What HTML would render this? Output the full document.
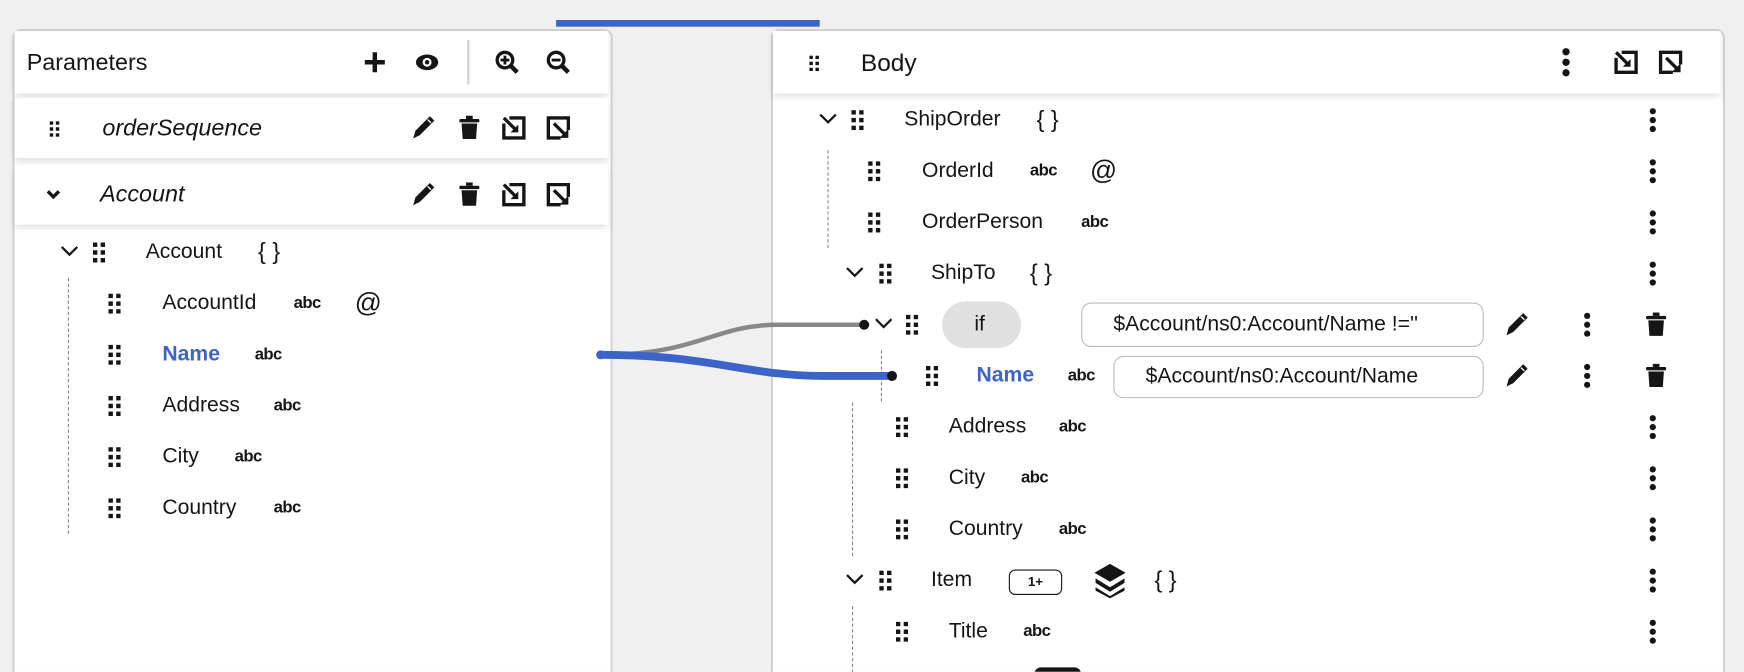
<!DOCTYPE html>
<html><head><meta charset="utf-8"><style>
html,body{margin:0;padding:0;width:1744px;height:672px;overflow:hidden;background:#f0f0f0;font-family:"Liberation Sans",sans-serif;color:#151515}
#w{position:absolute;left:0;top:0;width:1568px;height:604px;overflow:hidden;transform:scale(1.11224);transform-origin:0 0}
.a{position:absolute}
.t{position:absolute;transform:translateY(-50%);white-space:nowrap;font-size:19px;line-height:24px}
.abc{font-size:15px;font-weight:bold;letter-spacing:-0.5px}
.i{position:absolute;transform:translate(-50%,-50%)}
.panel{position:absolute;background:#fff;border:2px solid #d2d2d2;border-bottom:none;border-radius:8px 8px 0 0;overflow:hidden}
.card{position:absolute;background:#fff;box-shadow:0 3px 6px rgba(0,0,0,.13)}
.dl{position:absolute;border-left:1.5px dashed #888;width:0}
.box{position:absolute;border:1.5px solid #bbb;border-radius:9px;background:#fff;font-size:19px;line-height:36px;box-sizing:border-box;white-space:nowrap}
</style></head><body><div id="w">
<svg width="0" height="0" style="position:absolute"><defs>
<g id="dr"><rect x="0" y="0" width="4" height="4"/><rect x="7" y="0" width="4" height="4"/><rect x="0" y="7" width="4" height="4"/><rect x="7" y="7" width="4" height="4"/><rect x="0" y="14" width="4" height="4"/><rect x="7" y="14" width="4" height="4"/></g>
<g id="kb"><circle cx="3" cy="3" r="2.8"/><circle cx="3" cy="11" r="2.8"/><circle cx="3" cy="19" r="2.8"/></g>
<g id="pn"><path d="M17 1 L21 5 L8 18 L2 21 L4 14 Z" fill="#151515"/><path d="M15 4 L18 7" stroke="#fff" stroke-width="1.2"/></g>
<g id="tr"><rect x="1" y="3" width="18" height="3" rx="1"/><rect x="7" y="0" width="6" height="3"/><path d="M3 7 H17 L16 21 H4 Z"/></g>
<g id="c1"><path d="M2 7 V20 H20 V2 H7" fill="none" stroke="#151515" stroke-width="3"/><path d="M2 2 L13 13" stroke="#151515" stroke-width="3"/><path d="M8 15 H15 V8 Z" fill="#151515"/></g>
<g id="c2"><path d="M13 20 H2 V2 H20 V13" fill="none" stroke="#151515" stroke-width="3"/><path d="M7 7 L17 17" stroke="#151515" stroke-width="3"/><path d="M12 20 H20 V12 Z" fill="#151515"/></g>
<g id="ch"><path d="M1 1 L8 8 L15 1" fill="none" stroke="#151515" stroke-width="2"/></g>
</defs></svg>

<div class="a" style="left:500px;top:18px;width:237px;height:6px;background:#3c64c8"></div>

<!-- LEFT PANEL -->
<div class="panel" style="left:11px;top:26px;width:536px;height:600px"></div>
<div class="card" style="left:13px;top:28px;width:534px;height:56px"></div>
<div class="t" style="left:24px;top:57px;font-size:21px">Parameters</div>
<svg class="i" style="left:337px;top:56px" width="20" height="20"><path d="M10 1V19M1 10H19" stroke="#151515" stroke-width="4"/></svg>
<svg class="i" style="left:384px;top:56px" width="22" height="16"><ellipse cx="11" cy="8" rx="10" ry="7" fill="#151515"/><circle cx="11" cy="8" r="4" fill="#fff"/><circle cx="11" cy="8" r="2" fill="#151515"/></svg>
<div class="a" style="left:420px;top:36px;width:2px;height:40px;background:#d2d2d2"></div>
<svg class="i" style="left:456px;top:56px" width="22" height="22"><circle cx="9" cy="9" r="7" fill="none" stroke="#151515" stroke-width="3"/><path d="M14 14 L20 20" stroke="#151515" stroke-width="4"/><path d="M9 5V13M5 9H13" stroke="#151515" stroke-width="2.5"/></svg>
<svg class="i" style="left:502px;top:56px" width="22" height="22"><circle cx="9" cy="9" r="7" fill="none" stroke="#151515" stroke-width="3"/><path d="M14 14 L20 20" stroke="#151515" stroke-width="4"/><path d="M5 9H13" stroke="#151515" stroke-width="2.5"/></svg>

<div class="card" style="left:13px;top:88px;width:534px;height:54px"></div>
<svg class="i" style="left:49px;top:116px" width="9" height="14" viewBox="0 0 11 18" fill="#151515"><use href="#dr"/></svg>
<div class="t" style="left:92px;top:116px;font-size:21px;font-style:italic">orderSequence</div>
<svg class="i" style="left:381px;top:115px" width="23" height="23" fill="#151515"><use href="#pn"/></svg>
<svg class="i" style="left:422px;top:115px" width="20" height="22" fill="#151515"><use href="#tr"/></svg>
<svg class="i" style="left:462px;top:115px" width="22" height="22"><use href="#c1"/></svg>
<svg class="i" style="left:502px;top:115px" width="22" height="22"><use href="#c2"/></svg>

<div class="card" style="left:13px;top:148px;width:534px;height:54px"></div>
<svg class="i" style="left:48px;top:175px" width="14" height="10"><path d="M2 2 L7 7 L12 2" fill="none" stroke="#151515" stroke-width="3"/></svg>
<div class="t" style="left:90px;top:175px;font-size:21px;font-style:italic">Account</div>
<svg class="i" style="left:381px;top:175px" width="23" height="23" fill="#151515"><use href="#pn"/></svg>
<svg class="i" style="left:422px;top:175px" width="20" height="22" fill="#151515"><use href="#tr"/></svg>
<svg class="i" style="left:462px;top:175px" width="22" height="22"><use href="#c1"/></svg>
<svg class="i" style="left:502px;top:175px" width="22" height="22"><use href="#c2"/></svg>

<svg class="i" style="left:63px;top:226px" width="17" height="10"><use href="#ch"/></svg>
<svg class="i" style="left:89px;top:227px" width="11" height="18" fill="#151515"><use href="#dr"/></svg>
<div class="t" style="left:131px;top:227px">Account</div>
<div class="t" style="left:232px;top:227px;font-size:21px">{ }</div>
<div class="dl" style="left:61px;top:250px;height:230px"></div>

<svg class="i" style="left:103px;top:273px" width="11" height="18" fill="#151515"><use href="#dr"/></svg>
<div class="t" style="left:146px;top:273px">AccountId</div><div class="t abc" style="left:264px;top:273px">abc</div>
<div class="t" style="left:319px;top:273px;font-size:24px">@</div>
<svg class="i" style="left:103px;top:319px" width="11" height="18" fill="#151515"><use href="#dr"/></svg>
<div class="t" style="left:146px;top:319px;color:#3c64c8;font-weight:bold">Name</div><div class="t abc" style="left:229px;top:319px">abc</div>
<svg class="i" style="left:103px;top:365px" width="11" height="18" fill="#151515"><use href="#dr"/></svg>
<div class="t" style="left:146px;top:365px">Address</div><div class="t abc" style="left:246px;top:365px">abc</div>
<svg class="i" style="left:103px;top:411px" width="11" height="18" fill="#151515"><use href="#dr"/></svg>
<div class="t" style="left:146px;top:411px">City</div><div class="t abc" style="left:211px;top:411px">abc</div>
<svg class="i" style="left:103px;top:457px" width="11" height="18" fill="#151515"><use href="#dr"/></svg>
<div class="t" style="left:146px;top:457px">Country</div><div class="t abc" style="left:246px;top:457px">abc</div>

<!-- RIGHT PANEL -->
<div class="panel" style="left:693px;top:26px;width:854px;height:600px"></div>
<div class="card" style="left:695px;top:28px;width:852px;height:56px"></div>
<svg class="i" style="left:732px;top:57px" width="9" height="14" viewBox="0 0 11 18" fill="#151515"><use href="#dr"/></svg>
<div class="t" style="left:774px;top:57px;font-size:22px">Body</div>
<svg class="i" style="left:1408px;top:56px" width="8" height="26" viewBox="0 0 6 22" fill="#151515"><use href="#kb"/></svg>
<svg class="i" style="left:1462px;top:56px" width="22" height="22"><use href="#c1"/></svg>
<svg class="i" style="left:1502px;top:56px" width="22" height="22"><use href="#c2"/></svg>

<svg class="i" style="left:745px;top:107px" width="17" height="10"><use href="#ch"/></svg>
<svg class="i" style="left:771px;top:108px" width="11" height="18" fill="#151515"><use href="#dr"/></svg>
<div class="t" style="left:813px;top:108px">ShipOrder</div>
<div class="t" style="left:932px;top:108px;font-size:21px">{ }</div>
<div class="dl" style="left:744px;top:135px;height:88px"></div>
<svg class="i" style="left:786px;top:154px" width="11" height="18" fill="#151515"><use href="#dr"/></svg>
<div class="t" style="left:829px;top:154px">OrderId</div><div class="t abc" style="left:926px;top:154px">abc</div>
<div class="t" style="left:980px;top:154px;font-size:24px">@</div>
<svg class="i" style="left:786px;top:200px" width="11" height="18" fill="#151515"><use href="#dr"/></svg>
<div class="t" style="left:829px;top:200px">OrderPerson</div><div class="t abc" style="left:972px;top:200px">abc</div>

<svg class="i" style="left:769px;top:245px" width="17" height="10"><use href="#ch"/></svg>
<svg class="i" style="left:796px;top:246px" width="11" height="18" fill="#151515"><use href="#dr"/></svg>
<div class="t" style="left:837px;top:246px">ShipTo</div>
<div class="t" style="left:926px;top:246px;font-size:21px">{ }</div>

<svg class="i" style="left:795px;top:291px" width="17" height="10"><use href="#ch"/></svg>
<svg class="i" style="left:820px;top:292px" width="11" height="18" fill="#151515"><use href="#dr"/></svg>
<div class="a" style="left:847px;top:271px;width:71px;height:42px;border-radius:21px;background:#e0e0e0"></div>
<div class="t" style="left:876px;top:292px">if</div>
<div class="box" style="left:972px;top:272px;width:362px;height:40px;padding-left:28px;line-height:37px">$Account/ns0:Account/Name !=''</div>
<svg class="i" style="left:1364px;top:292px" width="23" height="23" fill="#151515"><use href="#pn"/></svg>
<svg class="i" style="left:1427px;top:292px" width="6" height="22" fill="#151515"><use href="#kb"/></svg>
<svg class="i" style="left:1489px;top:292px" width="20" height="22" fill="#151515"><use href="#tr"/></svg>

<div class="dl" style="left:792px;top:315px;height:46px"></div>
<svg class="i" style="left:838px;top:338px" width="11" height="18" fill="#151515"><use href="#dr"/></svg>
<div class="t" style="left:878px;top:338px;color:#3c64c8;font-weight:bold">Name</div><div class="t abc" style="left:960px;top:338px">abc</div>
<div class="box" style="left:1001px;top:320px;width:333px;height:38px;padding-left:28px;line-height:35px">$Account/ns0:Account/Name</div>
<svg class="i" style="left:1364px;top:338px" width="23" height="23" fill="#151515"><use href="#pn"/></svg>
<svg class="i" style="left:1427px;top:338px" width="6" height="22" fill="#151515"><use href="#kb"/></svg>
<svg class="i" style="left:1489px;top:338px" width="20" height="22" fill="#151515"><use href="#tr"/></svg>

<div class="dl" style="left:766px;top:362px;height:138px"></div>
<svg class="i" style="left:811px;top:384px" width="11" height="18" fill="#151515"><use href="#dr"/></svg>
<div class="t" style="left:853px;top:384px">Address</div><div class="t abc" style="left:952px;top:384px">abc</div>
<svg class="i" style="left:811px;top:430px" width="11" height="18" fill="#151515"><use href="#dr"/></svg>
<div class="t" style="left:853px;top:430px">City</div><div class="t abc" style="left:918px;top:430px">abc</div>
<svg class="i" style="left:811px;top:476px" width="11" height="18" fill="#151515"><use href="#dr"/></svg>
<div class="t" style="left:853px;top:476px">Country</div><div class="t abc" style="left:952px;top:476px">abc</div>

<svg class="i" style="left:769px;top:521px" width="17" height="10"><use href="#ch"/></svg>
<svg class="i" style="left:796px;top:522px" width="11" height="18" fill="#151515"><use href="#dr"/></svg>
<div class="t" style="left:837px;top:522px">Item</div>
<div class="a" style="left:907px;top:512px;width:46px;height:21px;border:1.5px solid #151515;border-radius:6px;font-size:12px;line-height:21px;text-align:center;font-weight:bold">1+</div>
<svg class="i" style="left:998px;top:522px" width="30" height="32" viewBox="0 0 30 32"><path d="M15 1 L29 9 L15 17 L1 9 Z" fill="#151515"/><path d="M2 14 L15 22 L28 14 L28 18 L15 26 L2 18 Z" fill="#151515"/><path d="M2 22 L15 30 L28 22 L28 25 L15 32 L2 25 Z" fill="#151515"/></svg>
<div class="t" style="left:1038px;top:522px;font-size:21px">{ }</div>
<div class="dl" style="left:766px;top:545px;height:60px"></div>
<svg class="i" style="left:811px;top:568px" width="11" height="18" fill="#151515"><use href="#dr"/></svg>
<div class="t" style="left:853px;top:568px">Title</div><div class="t abc" style="left:920px;top:568px">abc</div>
<div class="a" style="left:930px;top:600px;width:42px;height:10px;border-radius:6px 6px 0 0;background:#151515"></div>

<svg class="i" style="left:1486px;top:108px" width="6" height="22" fill="#151515"><use href="#kb"/></svg>
<svg class="i" style="left:1486px;top:154px" width="6" height="22" fill="#151515"><use href="#kb"/></svg>
<svg class="i" style="left:1486px;top:200px" width="6" height="22" fill="#151515"><use href="#kb"/></svg>
<svg class="i" style="left:1486px;top:246px" width="6" height="22" fill="#151515"><use href="#kb"/></svg>
<svg class="i" style="left:1486px;top:384px" width="6" height="22" fill="#151515"><use href="#kb"/></svg>
<svg class="i" style="left:1486px;top:430px" width="6" height="22" fill="#151515"><use href="#kb"/></svg>
<svg class="i" style="left:1486px;top:476px" width="6" height="22" fill="#151515"><use href="#kb"/></svg>
<svg class="i" style="left:1486px;top:522px" width="6" height="22" fill="#151515"><use href="#kb"/></svg>
<svg class="i" style="left:1486px;top:568px" width="6" height="22" fill="#151515"><use href="#kb"/></svg>

<!-- connectors -->
<svg class="a" style="left:0;top:0" width="1568" height="604">
<path d="M540 319 C 630 319, 640 292, 700 292 L777 292" fill="none" stroke="#888" stroke-width="4"/>
<path d="M540 319 C 640 319, 670 338, 740 338 L802 338" fill="none" stroke="#3c64c8" stroke-width="7"/>
<circle cx="540" cy="319" r="4" fill="#3c64c8"/>
<circle cx="777" cy="292" r="4.5" fill="#151515"/>
<circle cx="802" cy="338" r="4.5" fill="#151515"/>
</svg>
</div></body></html>
